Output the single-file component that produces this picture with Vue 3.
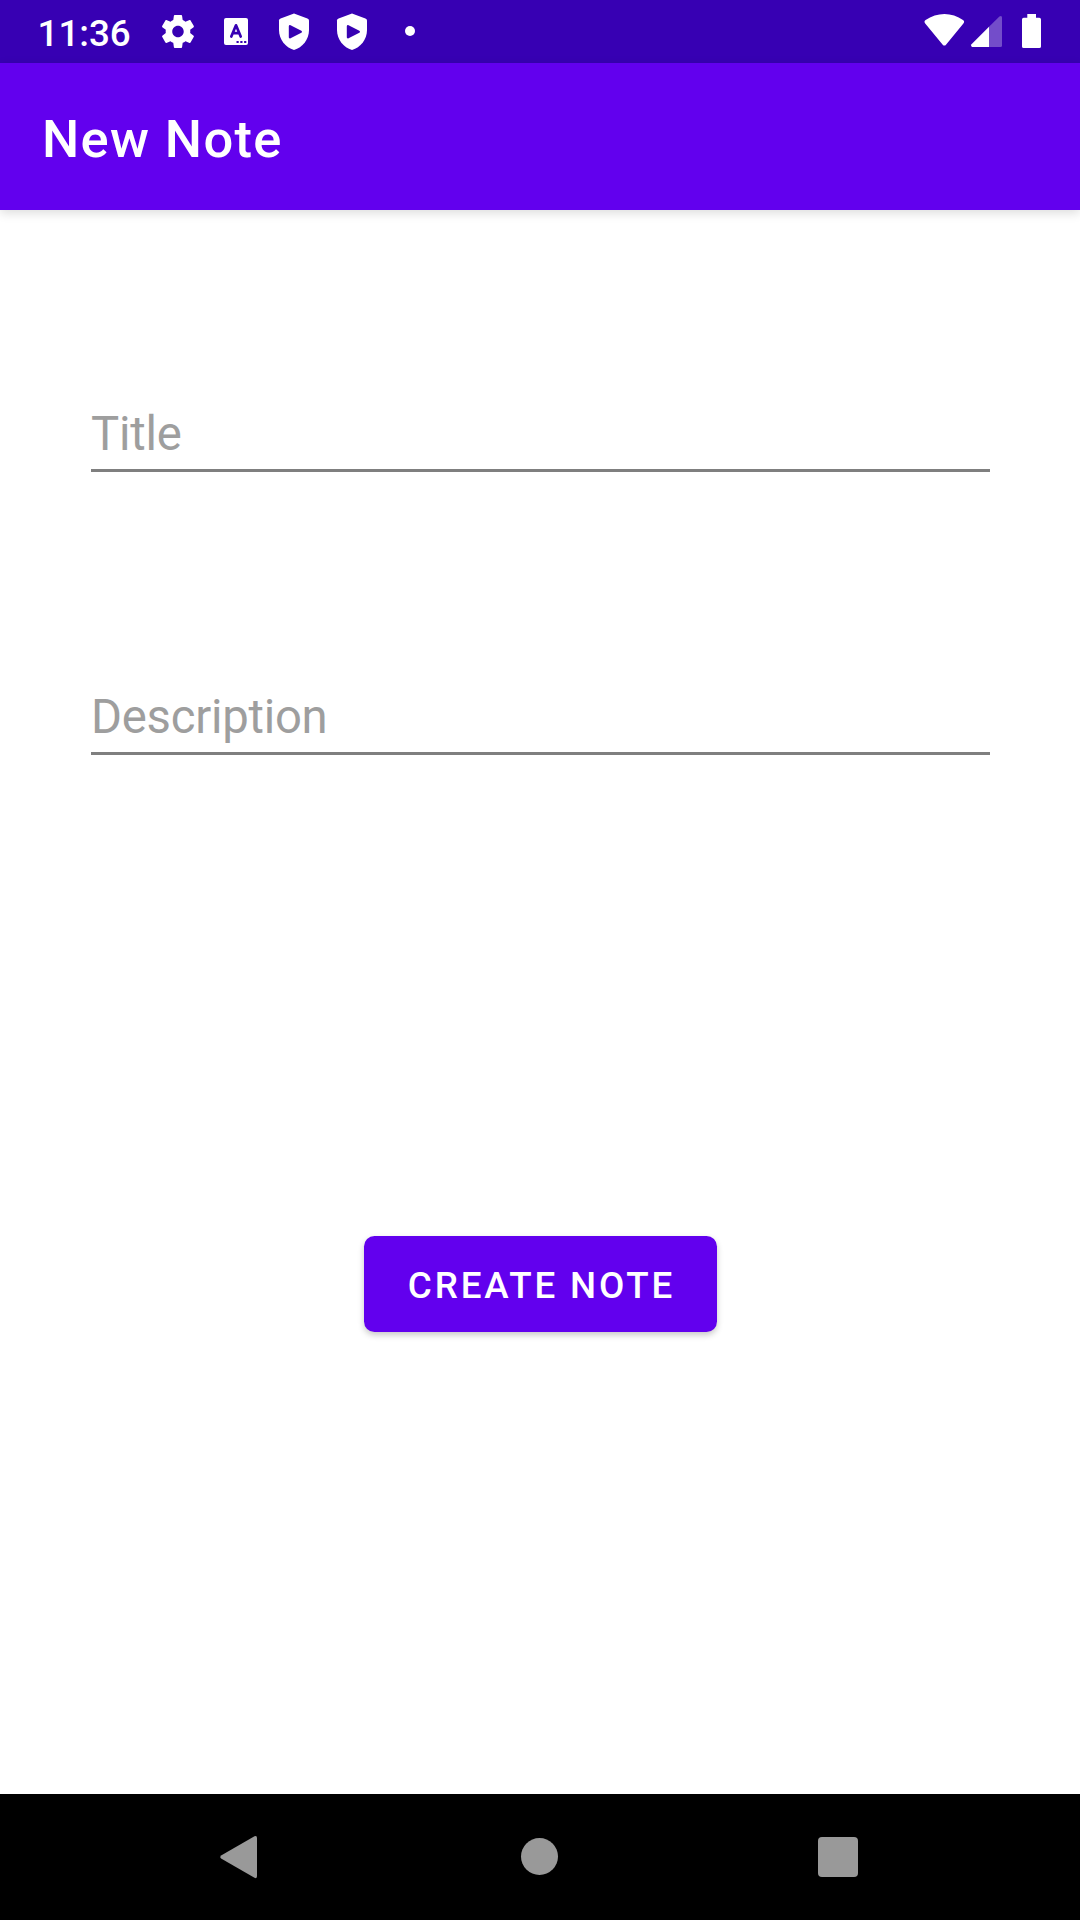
<script setup>
import { ref } from 'vue'

const title = ref('')
const description = ref('')
</script>

<template>
  <div class="screen">
    <header class="status">
      <span class="clock">11:36</span>
      <div class="notifications">
        <svg class="cell" viewBox="0 0 58 63">
          <path transform="translate(9.3 11.8) scale(1.64)" fill="#fff" d="M19.43 12.98c.04-.32.07-.64.07-.98s-.03-.66-.07-.98l2.11-1.65c.19-.15.24-.42.12-.64l-2-3.46c-.12-.22-.39-.3-.61-.22l-2.49 1c-.52-.4-1.08-.73-1.69-.98l-.38-2.65C14.46 2.18 14.25 2 14 2h-4c-.25 0-.46.18-.49.42l-.38 2.65c-.61.25-1.17.59-1.69.98l-2.49-1c-.23-.09-.49 0-.61.22l-2 3.46c-.13.22-.07.49.12.64l2.11 1.65c-.04.32-.07.65-.07.98s.03.66.07.98l-2.11 1.65c-.19.15-.24.42-.12.64l2 3.46c.12.22.39.3.61.22l2.49-1c.52.4 1.08.73 1.69.98l.38 2.65c.03.24.24.42.49.42h4c.25 0 .46-.18.49-.42l.38-2.65c.61-.25 1.17-.59 1.69-.98l2.49 1c.23.09.49 0 .61-.22l2-3.46c.12-.22.07-.49-.12-.64l-2.11-1.65zM12 15.5c-1.93 0-3.5-1.57-3.5-3.5s1.57-3.5 3.5-3.5 3.5 1.57 3.5 3.5-1.57 3.5-3.5 3.5z" />
        </svg>
        <svg class="cell" viewBox="0 0 58 63">
          <rect x="17" y="18" width="24" height="27" rx="2" fill="#fff" />
          <path d="M24.3 36.5 29 25.3 33.7 36.5M26 33.2h6" fill="none" stroke="#3700b3" stroke-width="2.7" stroke-linecap="round" stroke-linejoin="round" />
          <path d="M29.5 41h2.2v2h-2.2zM33.3 41h2.2v2h-2.2zM37.1 41h2.2v2h-2.2z" fill="#3700b3" />
        </svg>
        <svg v-for="n in 2" :key="n" class="cell" viewBox="0 0 58 63">
          <path d="M29 13.5 42.4 18.4Q44 19 44 20.6V30C44 39.500 37.500 47.500 29 50 20.500 47.500 14 39.500 14 30V20.600Q14 19 15.600 18.400Z" fill="#fff" />
          <path d="M25 26.200 35.800 31.700 25 37.200Z" fill="#3700b3" stroke="#3700b3" stroke-width="2.400" stroke-linejoin="round" />
        </svg>
        <svg class="cell" viewBox="0 0 58 63">
          <circle cx="29" cy="31" r="5" fill="#fff" />
        </svg>
      </div>
      <svg class="system" viewBox="0 0 130 63" fill="#fff">
        <path d="M5.200 23.400Q3.600 21.500 5.600 20.100C17 12 32 12 43 20.100Q45 21.500 43.400 23.400L26 44.700Q24.400 46.500 22.700 44.700Z" />
        <path d="M69 26.800V47H52Q50.200 46 51.500 44.300Z" />
        <path d="M69 26.800 79.400 16.400Q82 15 82 17.500V45.500Q82 47 80.500 47H69Z" opacity=".3" />
        <path d="M107.300 14h8.700v3.700h3.300q1.700 0 1.700 1.700v27q0 1.600-1.700 1.600h-15.600q-1.700 0-1.700-1.600v-27q0-1.700 1.700-1.700h3.600Z" />
      </svg>
    </header>
    <div class="appbar"><h1>New Note</h1></div>
    <main class="content">
      <input v-model="title" class="field" type="text" placeholder="Title" />
      <input v-model="description" class="field second" type="text" placeholder="Description" />
      <button class="create" type="button">CREATE NOTE</button>
    </main>
    <nav class="nav">
      <svg class="navicon" viewBox="0 0 60 60"><path d="M10.500 28.200 43.500 9.200Q46 8.200 46 11V49Q46 52 43.500 50.800L10.500 31.800Q8 30 10.500 28.200Z" fill="#999" /></svg>
      <svg class="navicon" viewBox="0 0 60 60"><circle cx="29.500" cy="29.500" r="18.500" fill="#999" /></svg>
      <svg class="navicon" viewBox="0 0 60 60"><rect x="9" y="10" width="40" height="40" rx="4" fill="#999" /></svg>
    </nav>
  </div>
</template>

<style>
body {
  margin: 0;
  background: #fff;
}
</style>

<style scoped>
.screen {
  width: 1080px;
  height: 1920px;
  display: flex;
  flex-direction: column;
  background: #fff;
  font-family: Roboto, sans-serif;
  overflow: hidden;
}
.status {
  height: 63px;
  flex: none;
  display: flex;
  background: #3700b3;
  color: #fff;
}
.clock {
  box-sizing: border-box;
  width: 149px;
  padding-left: 37.5px;
  font-size: 36.75px;
  font-weight: 500;
  line-height: 68px;
}
.notifications {
  display: flex;
}
.cell {
  width: 58px;
  height: 63px;
}
.system {
  width: 130px;
  height: 63px;
  margin-left: auto;
  margin-right: 30px;
}
.appbar {
  box-sizing: border-box;
  height: 147px;
  flex: none;
  display: flex;
  align-items: center;
  padding: 4px 0 0 42px;
  background: #6200ee;
  color: #fff;
  box-shadow: 0 3px 10px rgba(0, 0, 0, 0.14);
}
h1 {
  margin: 0;
  font-size: 52.5px;
  font-weight: 500;
  line-height: 62px;
  letter-spacing: 1.35px;
}
.content {
  flex: 1;
  display: flex;
  flex-direction: column;
  align-items: center;
  padding-top: 184px;
}
.field {
  box-sizing: border-box;
  width: 899px;
  height: 78px;
  padding: 5px 0 0 0.5px;
  border: 0;
  border-bottom: 3px solid #7f7f7f;
  border-radius: 0;
  background: transparent;
  font: 400 47.25px/66px Roboto, sans-serif;
  letter-spacing: -0.25px;
  outline: none;
}
.field::placeholder {
  color: #9e9e9e;
  opacity: 1;
}
.second {
  margin-top: 205px;
}
.create {
  width: 353px;
  height: 96px;
  margin-top: 481px;
  padding: 4px 0 0 3px;
  border: 0;
  border-radius: 10.5px;
  background: #6200ee;
  color: #fff;
  font: 500 36.75px/44px Roboto, sans-serif;
  letter-spacing: 2.85px;
  white-space: nowrap;
  box-shadow: 0 3px 6px rgba(0, 0, 0, 0.22);
}
.nav {
  height: 126px;
  flex: none;
  display: flex;
  justify-content: center;
  align-items: center;
  gap: 239px;
  background: #000;
}
.navicon {
  width: 60px;
  height: 60px;
}
</style>
